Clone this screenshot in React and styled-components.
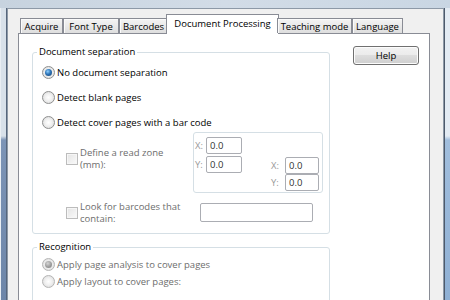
import React from "react";
import styled, { createGlobalStyle } from "styled-components";

const Global = createGlobalStyle`
  html, body { margin: 0; padding: 0; }
  body {
    width: 450px; height: 300px; overflow: hidden;
    font-family: "Open Sans", "Liberation Sans", sans-serif;
    font-size: 9.5px; color: #000;
  }
  #root { width: 450px; height: 300px; }
`;

const Frame = styled.div`
  width: 450px; height: 300px; box-sizing: border-box; padding-top: 8px;
  background: linear-gradient(to right, #c7d3df, #d2dce7 50%, #c9d6e3);
  display: flex; overflow: hidden;
`;
const LeftEdge = styled.div`
  width: 7px; flex: none;
  background: linear-gradient(to bottom, #d8e1ea 0, #d8e1ea 128px, #7c94b6 132px, #6d86a9 100%);
  box-shadow: inset 1px 0 0 #e9eef3, inset -1px 0 0 #56667c;
`;
const RightEdge = styled.div`
  width: 6px; flex: none;
  background: linear-gradient(to bottom, #e3ebf3 0, #e3ebf3 128px, #a1bedd 132px, #8fb0d4 100%);
  box-shadow: inset 1px 0 0 #4d5a6b;
`;
const Client = styled.div`
  flex: 1; display: flex; flex-direction: column;
  border: 1px solid #8d99a7; border-bottom: none;
  background: #f0f0f0;
  padding: 5px 13px 0 10px;
`;
const TabRow = styled.div`
  display: flex; align-items: flex-end; height: 19px; padding-left: 2px;
  position: relative; z-index: 1;
`;
const Tab = styled.div`
  box-sizing: border-box; width: ${p => p.$w}px;
  height: ${p => (p.$active ? 20 : 15)}px;
  margin: ${p => (p.$active ? "0 -2px -1px" : "0")};
  border: 1px solid #898c95; border-bottom: none;
  background: ${p => (p.$active ? "#fff" : "linear-gradient(#f4f4f4, #e9e9e9 50%, #dedede)")};
  box-shadow: ${p => (p.$active ? "none" : "inset 1px 1px 0 #fbfbfb")};
  display: flex; align-items: center; justify-content: center;
  padding-bottom: ${p => (p.$active ? 2 : 0)}px;
  white-space: nowrap;
`;
const Pane = styled.div`
  flex: 1; display: flex; justify-content: space-between; align-items: flex-start;
  border: 1px solid #898c95; background: #fff;
  padding: 12px 10px 0 13px;
`;
const LeftCol = styled.div`
  width: 298px; display: flex; flex-direction: column;
`;
const Group = styled.div`
  position: relative; box-sizing: border-box;
  border: 1px solid #d5dfe5; border-radius: 3px;
  margin-top: ${p => p.$mt}px;
  padding: ${p => p.$pad};
`;
const Legend = styled.span`
  position: absolute; top: -7px; left: 4px; padding: 0 2px;
  background: #fff; line-height: 12px;
`;
const RadioList = styled.div`
  display: flex; flex-direction: column; gap: ${p => p.$gap}px;
`;
const RadioRow = styled.div`
  display: flex; align-items: center; gap: 2px; height: 13px; line-height: 13px;
  color: ${p => (p.$disabled ? "#6d6d6d" : "#000")};
  white-space: nowrap;
`;
const Radio = styled.span`
  position: relative; box-sizing: border-box; flex: none;
  width: 13px; height: 13px; border-radius: 50%;
  border: 1px solid ${p => (p.$disabled ? "#b5b5b5" : "#8e8f8f")};
  background: radial-gradient(circle at 50% 50%, #ffffff 0, #f0f0f0 45%, #d4d4d4 100%);
  &::after {
    content: ""; display: ${p => (p.$checked ? "block" : "none")};
    position: absolute; left: 2px; top: 2px; width: 7px; height: 7px; border-radius: 50%;
    background: ${p =>
      p.$disabled
        ? "radial-gradient(circle at 40% 35%, #d4d4d4 0, #9c9c9c 55%, #808080 100%)"
        : "radial-gradient(circle at 40% 35%, #8fd0ff 0, #2d74b8 45%, #173f6b 100%)"};
  }
`;
const SubGrid = styled.div`
  display: grid; grid-template-columns: 127px auto; grid-template-rows: 61px 19px;
  row-gap: 10px; align-items: center; margin: 3px 0 0 24px;
`;
const CheckRow = styled.div`
  display: flex; align-items: center; gap: 2px;
  margin-bottom: ${p => p.$mb || 0}px;
  color: #6d6d6d;
`;
const CheckBox = styled.span`
  box-sizing: border-box; flex: none; width: 12px; height: 12px;
  border: 1px solid #bcbcbc;
  background: linear-gradient(135deg, #e4e4e4, #fafafa);
  box-shadow: inset 0 0 0 1px #f6f6f6;
`;
const CheckLabel = styled.span`
  max-width: 106px; line-height: 12px;
`;
const ZoneBox = styled.div`
  box-sizing: border-box; width: 130px; height: 61px;
  border: 1px solid #d5dfe5; border-radius: 3px;
  display: flex; justify-content: space-between;
  padding: 4px 3px 1px 1px;
`;
const CoordGrid = styled.div`
  display: grid; grid-template-columns: ${p => p.$lw}px auto;
  row-gap: ${p => p.$gap}px; align-items: center; align-self: ${p => p.$align};
`;
const CoordLabel = styled.span`
  color: #9a9a9a; line-height: 12px;
`;
const NumField = styled.div`
  box-sizing: border-box; width: ${p => p.$w}px; height: 17px;
  border: 1px solid #abadb3; border-radius: 2px; background: #fff;
  padding-left: 3px; display: flex; align-items: center; color: #333;
`;
const TextField = styled.div`
  box-sizing: border-box; width: 113px; height: 19px; margin-left: 7px;
  border: 1px solid #abadb3; border-radius: 2px; background: #fff;
`;
const Button = styled.button`
  box-sizing: border-box; width: 66px; height: 19px; padding: 0;
  font: inherit; color: #000;
  border: 1px solid #707070; border-radius: 3px;
  background: linear-gradient(#f2f2f2 0%, #ebebeb 50%, #dddddd 50%, #cfcfcf 100%);
  box-shadow: inset 0 0 0 1px #fcfcfc;
`;

const tabs = [
  { label: "Acquire", w: 43 },
  { label: "Font Type", w: 56 },
  { label: "Barcodes", w: 49 },
  { label: "Document Processing", w: 113, active: true },
  { label: "Teaching mode", w: 75 },
  { label: "Language", w: 51 },
];

export default function App() {
  return (
    <>
      <Global />
      <Frame>
        <LeftEdge />
        <Client>
          <TabRow>
            {tabs.map(t => (
              <Tab key={t.label} $w={t.w} $active={t.active}>{t.label}</Tab>
            ))}
          </TabRow>
          <Pane>
            <LeftCol>
              <Group $mt={6} $pad="13px 0 11px 9px">
                <Legend>Document separation</Legend>
                <RadioList $gap={12}>
                  <RadioRow><Radio $checked />No document separation</RadioRow>
                  <RadioRow><Radio />Detect blank pages</RadioRow>
                  <RadioRow><Radio />Detect cover pages with a bar code</RadioRow>
                </RadioList>
                <SubGrid>
                  <CheckRow $mb={8}>
                    <CheckBox />
                    <CheckLabel>Define a read zone (mm):</CheckLabel>
                  </CheckRow>
                  <ZoneBox>
                    <CoordGrid $lw={11} $gap={2} $align="flex-start">
                      <CoordLabel>X:</CoordLabel><NumField $w={36}>0.0</NumField>
                      <CoordLabel>Y:</CoordLabel><NumField $w={36}>0.0</NumField>
                    </CoordGrid>
                    <CoordGrid $lw={14} $gap={0} $align="flex-end">
                      <CoordLabel>X:</CoordLabel><NumField $w={34}>0.0</NumField>
                      <CoordLabel>Y:</CoordLabel><NumField $w={34}>0.0</NumField>
                    </CoordGrid>
                  </ZoneBox>
                  <CheckRow>
                    <CheckBox />
                    <CheckLabel>Look for barcodes that contain:</CheckLabel>
                  </CheckRow>
                  <TextField />
                </SubGrid>
              </Group>
              <Group $mt={13} $pad="10px 0 20px 9px">
                <Legend>Recognition</Legend>
                <RadioList $gap={4}>
                  <RadioRow $disabled><Radio $checked $disabled />Apply page analysis to cover pages</RadioRow>
                  <RadioRow $disabled><Radio $disabled />Apply layout to cover pages:</RadioRow>
                </RadioList>
              </Group>
            </LeftCol>
            <Button>Help</Button>
          </Pane>
        </Client>
        <RightEdge />
      </Frame>
    </>
  );
}
